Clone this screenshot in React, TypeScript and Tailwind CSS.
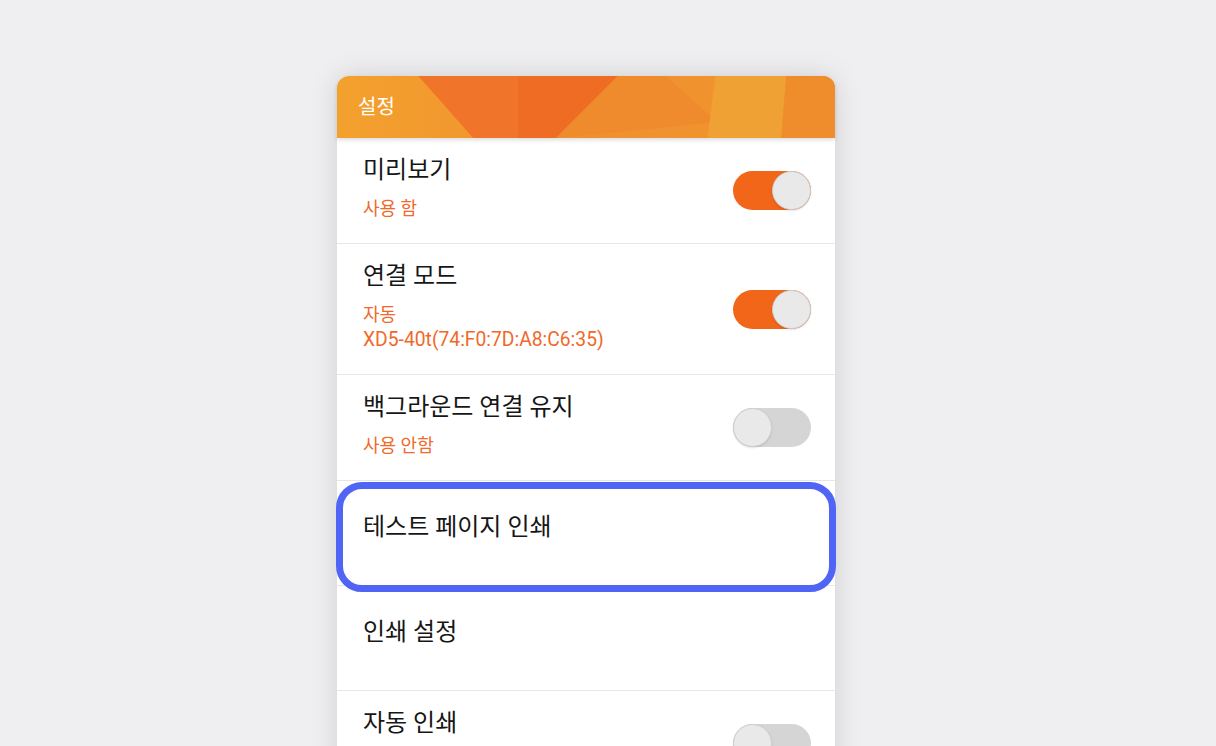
import React from "react";

const font = { fontFamily: 'Roboto, "Noto Sans CJK KR", sans-serif' };

function Toggle({ on }: { on: boolean }) {
  return (
    <div
      className={`flex h-[39px] w-[78px] shrink-0 items-center rounded-full ${
        on ? "justify-end bg-[#f26619]" : "justify-start bg-[#d5d5d5]"
      }`}
    >
      <div className="h-[39px] w-[39px] rounded-full border border-[#cfcfcf] bg-[#e9e9e9] shadow-[0_1px_2px_rgba(0,0,0,0.12)]" />
    </div>
  );
}

type Row = { title: string; sub?: string[]; toggle?: boolean; highlight?: boolean };

const rows: Row[] = [
  { title: "미리보기", sub: ["사용 함"], toggle: true },
  { title: "연결 모드", sub: ["자동", "XD5-40t(74:F0:7D:A8:C6:35)"], toggle: true },
  { title: "백그라운드 연결 유지", sub: ["사용 안함"], toggle: false },
  { title: "테스트 페이지 인쇄", highlight: true },
  { title: "인쇄 설정" },
  { title: "자동 인쇄", sub: ["사용 안함"], toggle: false },
];

function Header() {
  return (
    <div className="relative z-10 h-[62px] rounded-t-[12px] shadow-[0_2px_4px_rgba(0,0,0,0.14)]">
      <svg
        className="absolute inset-0 h-full w-full rounded-t-[12px]"
        viewBox="0 0 500 62"
        preserveAspectRatio="none"
      >
        <defs>
          <linearGradient id="hg" x1="0" y1="0" x2="1" y2="0">
            <stop offset="0" stopColor="#f3a12e" />
            <stop offset="0.5" stopColor="#f08f2f" />
            <stop offset="1" stopColor="#f0982f" />
          </linearGradient>
        </defs>
        <rect x="0" y="0" width="500" height="62" fill="url(#hg)" />
        <polygon points="82,0 282,0 220,62 137,62" fill="#ef6c24" />
        <polygon points="82,0 182,0 182,62 137,62" fill="#f0752a" />
        <polygon points="282,0 330,0 382,46 220,62" fill="#ef8a2d" />
        <polygon points="380,0 451,0 446,62 372,62" fill="#f0a133" />
        <polygon points="451,0 500,0 500,62 446,62" fill="#ef8d2d" />
      </svg>
      <div className="relative flex h-full items-center pl-[21px] pb-[1px] text-[20px] text-white" style={font}>
        설정
      </div>
    </div>
  );
}

export default function App() {
  return (
    <div className="h-[746px] overflow-hidden bg-[#efeff1] pl-[337px] pt-[76px]" style={font}>
      <div className="w-[498px] rounded-t-[12px] bg-white shadow-[0_0_28px_rgba(0,0,0,0.13)]">
        <Header />
        {rows.map((r) => (
          <div
            key={r.title}
            className={`relative flex items-center justify-between border-b border-[#e7e7e7] pl-[26px] pr-[24px] ${
              r.sub ? "" : "h-[105px] items-start"
            }`}
          >
            <div className={r.sub ? "pt-[17px] pb-[22px]" : "pt-[31px]"}>
              <div className="text-[24px] leading-[30px] text-[#161616]">{r.title}</div>
              {r.sub && (
                <div className="mt-[11px]">
                  {r.sub.map((s) => (
                    <div
                      key={s}
                      className={`leading-[25px] text-[#f0692a] ${
                        s.startsWith("XD5") ? "text-[19.3px]" : "text-[18px]"
                      }`}
                    >
                      {s}
                    </div>
                  ))}
                </div>
              )}
            </div>
            {r.toggle !== undefined && <Toggle on={r.toggle} />}
            {r.highlight && (
              <div className="absolute -left-px -right-px top-[1px] z-20 h-[110px] rounded-[26px] border-[7px] border-[#5065f6]" />
            )}
          </div>
        ))}
      </div>
    </div>
  );
}
